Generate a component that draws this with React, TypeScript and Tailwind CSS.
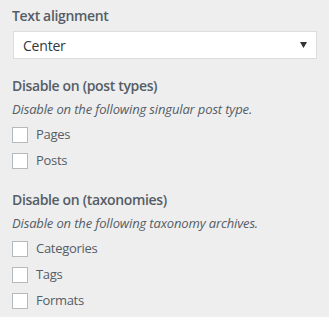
import React from "react";

function Check({ label }: { label: string }) {
  return (
    <label className="flex items-center h-[26px]">
      <span className="w-4 h-4 bg-white border border-[#b4b9be] shrink-0" />
      <span className="ml-2 text-[13px] tracking-[-0.3px] text-[#555d66]">{label}</span>
    </label>
  );
}

export default function App() {
  return (
    <div
      className="w-[329px] h-[317px] bg-[#eeeeee] px-3 pt-[6px] text-[#555d66]"
      style={{ fontFamily: '"Open Sans", sans-serif' }}
    >
      <div className="text-[14px] font-semibold leading-[20px] tracking-[-0.35px] text-[#555d66]">Text alignment</div>
      <div className="mt-[5px] ml-px w-[304px] h-[28px] bg-white border border-[#dddddd] flex items-center justify-between pl-[9px] pr-[9px]">
        <span className="text-[14px] tracking-[-0.2px] text-[#32373c]">Center</span>
        <svg width="7" height="6" viewBox="0 0 7 6"><path d="M0 0h7L3.5 6z" fill="#333" /></svg>
      </div>
      <div className="mt-[17px] text-[14px] font-semibold leading-[20px] tracking-[-0.35px]">Disable on (post types)</div>
      <div className="mt-[3px] text-[13px] italic leading-[20px] tracking-[-0.14px]">Disable on the following singular post type.</div>
      <div className="mt-[3px]">
        <Check label="Pages" />
        <Check label="Posts" />
      </div>
      <div className="mt-[16px] text-[14px] font-semibold leading-[20px] tracking-[-0.35px]">Disable on (taxonomies)</div>
      <div className="mt-[3px] text-[13px] italic leading-[20px] tracking-[-0.14px]">Disable on the following taxonomy archives.</div>
      <div className="mt-[3px]">
        <Check label="Categories" />
        <Check label="Tags" />
        <Check label="Formats" />
      </div>
    </div>
  );
}
